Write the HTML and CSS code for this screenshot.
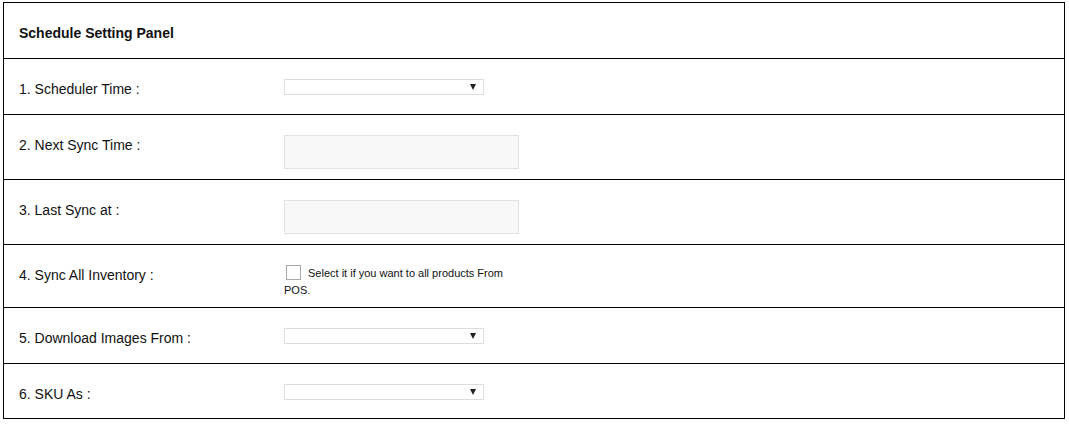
FILE: index.html
```html
<!DOCTYPE html>
<html>
<head>
<meta charset="utf-8">
<link rel="stylesheet" href="styles.css">
</head>
<body>
<div class="panel">
  <div class="panel-head">Schedule Setting Panel</div>
  <div class="row row-select">
    <div class="label">1. Scheduler Time :</div>
    <div class="control"><div class="select-wrap"><select class="select"></select></div></div>
  </div>
  <div class="row row-input">
    <div class="label">2. Next Sync Time :</div>
    <div class="control"><input class="text-input" type="text" readonly></div>
  </div>
  <div class="row row-input">
    <div class="label">3. Last Sync at :</div>
    <div class="control"><input class="text-input" type="text" readonly></div>
  </div>
  <div class="row row-check">
    <div class="label">4. Sync All Inventory :</div>
    <div class="control">
      <div class="check-text"><input type="checkbox" class="check">Select it if you want to all products From POS.</div>
    </div>
  </div>
  <div class="row row-select">
    <div class="label">5. Download Images From :</div>
    <div class="control"><div class="select-wrap"><select class="select"></select></div></div>
  </div>
  <div class="row row-select last">
    <div class="label">6. SKU As :</div>
    <div class="control"><div class="select-wrap"><select class="select"></select></div></div>
  </div>
</div>
</body>
</html>
```
FILE: styles.css
```css
html, body {
  margin: 0;
  padding: 0;
  background: #fff;
}
body {
  padding: 2px 4px 0 3px;
  font-family: "Liberation Sans", Arial, sans-serif;
  color: #111;
}
.panel {
  border: 1px solid #000;
}
.panel-head {
  height: 56px;
  box-sizing: border-box;
  padding: 22px 15px 0;
  font-size: 14px;
  font-weight: bold;
  line-height: 17px;
  border-bottom: 1px solid #000;
}
.row {
  display: grid;
  grid-template-columns: 265px 1fr;
  padding: 0 15px;
  border-bottom: 1px solid #000;
  box-sizing: border-box;
}
.row.last {
  border-bottom: none;
}
.row-select { height: 56px; }
.row.last { height: 54px; }
.row-input { height: 65px; }
.row-check { height: 63px; }
.label {
  font-size: 14px;
  line-height: 16px;
  padding-top: 22px;
}
.control {
  padding-top: 20px;
}
.select-wrap {
  position: relative;
  width: 200px;
  height: 16px;
}
.select {
  -webkit-appearance: none;
  appearance: none;
  display: block;
  width: 200px;
  height: 16px;
  margin: 0;
  padding: 0;
  border: 1px solid #dcdcdc;
  background: #fff;
  box-sizing: border-box;
  border-radius: 0;
}
.select-wrap::after {
  content: "";
  position: absolute;
  left: 186px;
  top: 5px;
  border-left: 3px solid transparent;
  border-right: 3px solid transparent;
  border-top: 6px solid #222;
}
.text-input {
  display: block;
  width: 235px;
  height: 34px;
  margin: 0;
  box-sizing: border-box;
  border: 1px solid #e2e2e2;
  background: #f8f8f8;
  border-radius: 0;
  outline: none;
}
.check-text {
  width: 235px;
  font-size: 11px;
  line-height: 17px;
  color: #111;
}
.check {
  -webkit-appearance: none;
  appearance: none;
  width: 15px;
  height: 15px;
  margin: 0 7px 0 2px;
  border: 1px solid #a9a9a9;
  background: #fff;
  box-sizing: border-box;
  vertical-align: -3px;
  border-radius: 0;
}
```
